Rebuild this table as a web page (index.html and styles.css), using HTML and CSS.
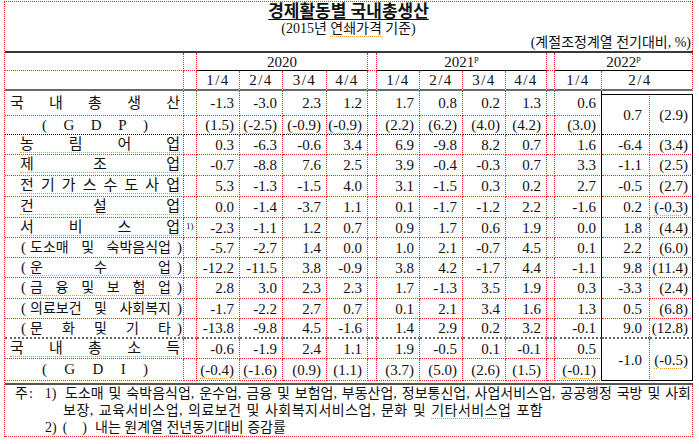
FILE: index.html
```html
<!DOCTYPE html>
<html lang="ko">
<head>
<meta charset="utf-8">
<title>경제활동별 국내총생산</title>
<link rel="stylesheet" href="styles.css">
</head>
<body>
<div class="page">
  <header class="head">
    <h1 class="title">경제활동별 국내총생산</h1>
    <p class="sub">(2015년 <span class="sq">연쇄가격</span> 기준)</p>
    <p class="unit">(계절조정계열 전기대비, %)</p>
  </header>

  <div class="grid">
    <!-- header row 1 -->
    <div class="c"></div>
    <div class="c"></div>
    <div class="c yr s4"><span>2020</span></div>
    <div class="c"></div>
    <div class="c yr s4"><span>2021<sup>p</sup></span></div>
    <div class="c"></div>
    <div class="c yr s3"><span>2022<sup>p</sup></span></div>

    <!-- header row 2 -->
    <div class="c h2"></div>
    <div class="c h2"></div>
    <div class="c h2 q">1/4</div>
    <div class="c h2 q">2/4</div>
    <div class="c h2 q">3/4</div>
    <div class="c h2 q">4/4</div>
    <div class="c h2"></div>
    <div class="c h2 q">1/4</div>
    <div class="c h2 q">2/4</div>
    <div class="c h2 q">3/4</div>
    <div class="c h2 q">4/4</div>
    <div class="c h2"></div>
    <div class="c h2 q">1/4</div>
    <div class="c h2 q s2 qw">2/4</div>

    <!-- 국내총생산 -->
    <div class="c lab w"><span class="t"><i>국</i><i>내</i><i>총</i><i>생</i><i>산</i></span></div>
    <div class="c"></div>
    <div class="c n">-1.3</div><div class="c n">-3.0</div><div class="c n">2.3</div><div class="c n">1.2</div>
    <div class="c"></div>
    <div class="c n">1.7</div><div class="c n">0.8</div><div class="c n">0.2</div><div class="c n">1.3</div>
    <div class="c"></div>
    <div class="c n bl">0.6</div>
    <div class="c n v r2 bt dk">0.7</div>
    <div class="c n br r2 bt dk">(2.9)</div>

    <!-- (GDP) -->
    <div class="c lab g dk"><span class="t"><i>(</i><i>G</i><i>D</i><i>P</i><i>)</i></span></div>
    <div class="c dk"></div>
    <div class="c n dk">(1.5)</div><div class="c n dk"><span class="sq">(-2.5)</span></div><div class="c n dk"><span class="sq">(-0.9)</span></div><div class="c n dk"><span class="sq">(-0.9)</span></div>
    <div class="c dk"></div>
    <div class="c n dk">(2.2)</div><div class="c n dk">(6.2)</div><div class="c n dk">(4.0)</div><div class="c n dk">(4.2)</div>
    <div class="c dk"></div>
    <div class="c n bl dk">(3.0)</div>

    <!-- 농림어업 -->
    <div class="c lab sq"><span class="t"><i>농</i><i>림</i><i>어</i><i>업</i></span></div>
    <div class="c"></div>
    <div class="c n">0.3</div><div class="c n">-6.3</div><div class="c n">-0.6</div><div class="c n">3.4</div>
    <div class="c"></div>
    <div class="c n">6.9</div><div class="c n">-9.8</div><div class="c n">8.2</div><div class="c n">0.7</div>
    <div class="c"></div>
    <div class="c n bl">1.6</div>
    <div class="c n v">-6.4</div>
    <div class="c n br">(3.4)</div>

    <!-- 제조업 -->
    <div class="c lab sq"><span class="t"><i>제</i><i>조</i><i>업</i></span></div>
    <div class="c"></div>
    <div class="c n">-0.7</div><div class="c n">-8.8</div><div class="c n">7.6</div><div class="c n">2.5</div>
    <div class="c"></div>
    <div class="c n">3.9</div><div class="c n">-0.4</div><div class="c n">-0.3</div><div class="c n">0.7</div>
    <div class="c"></div>
    <div class="c n bl">3.3</div>
    <div class="c n v">-1.1</div>
    <div class="c n br">(2.5)</div>

    <!-- 전기가스수도사업 -->
    <div class="c lab sq"><span class="t"><i>전</i><i>기</i><i>가</i><i>스</i><i>수</i><i>도</i><i>사</i><i>업</i></span></div>
    <div class="c"></div>
    <div class="c n">5.3</div><div class="c n">-1.3</div><div class="c n">-1.5</div><div class="c n">4.0</div>
    <div class="c"></div>
    <div class="c n">3.1</div><div class="c n">-1.5</div><div class="c n">0.3</div><div class="c n">0.2</div>
    <div class="c"></div>
    <div class="c n bl">2.7</div>
    <div class="c n v">-0.5</div>
    <div class="c n br">(2.7)</div>

    <!-- 건설업 -->
    <div class="c lab sq"><span class="t"><i>건</i><i>설</i><i>업</i></span></div>
    <div class="c"></div>
    <div class="c n">0.0</div><div class="c n">-1.4</div><div class="c n">-3.7</div><div class="c n">1.1</div>
    <div class="c"></div>
    <div class="c n">0.1</div><div class="c n">-1.7</div><div class="c n">-1.2</div><div class="c n">2.2</div>
    <div class="c"></div>
    <div class="c n bl">-1.6</div>
    <div class="c n v">0.2</div>
    <div class="c n br"><span class="sq">(-0.3)</span></div>

    <!-- 서비스업 -->
    <div class="c lab sq"><span class="t"><i>서</i><i>비</i><i>스</i><i>업</i></span></div>
    <div class="c ft"><span>1)</span></div>
    <div class="c n">-2.3</div><div class="c n">-1.1</div><div class="c n">1.2</div><div class="c n">0.7</div>
    <div class="c"></div>
    <div class="c n">0.9</div><div class="c n">1.7</div><div class="c n">0.6</div><div class="c n">1.9</div>
    <div class="c"></div>
    <div class="c n bl">0.0</div>
    <div class="c n v">1.8</div>
    <div class="c n br">(4.4)</div>

    <!-- 도소매 및 숙박음식업 -->
    <div class="c lab p"><span class="t"><i>(</i><span class="in"><i>도소매</i><i>및</i><i>숙박음식업</i></span><i>)</i></span></div>
    <div class="c"></div>
    <div class="c n">-5.7</div><div class="c n">-2.7</div><div class="c n">1.4</div><div class="c n">0.0</div>
    <div class="c"></div>
    <div class="c n">1.0</div><div class="c n">2.1</div><div class="c n">-0.7</div><div class="c n">4.5</div>
    <div class="c"></div>
    <div class="c n bl">0.1</div>
    <div class="c n v">2.2</div>
    <div class="c n br">(6.0)</div>

    <!-- 운수업 -->
    <div class="c lab p sqi"><span class="t"><i>(</i><span class="in"><i>운</i><i>수</i><i>업</i></span><i>)</i></span></div>
    <div class="c"></div>
    <div class="c n">-12.2</div><div class="c n">-11.5</div><div class="c n">3.8</div><div class="c n">-0.9</div>
    <div class="c"></div>
    <div class="c n">3.8</div><div class="c n">4.2</div><div class="c n">-1.7</div><div class="c n">4.4</div>
    <div class="c"></div>
    <div class="c n bl">-1.1</div>
    <div class="c n v">9.8</div>
    <div class="c n br">(11.4)</div>

    <!-- 금융 및 보험업 -->
    <div class="c lab p sqi"><span class="t"><i>(</i><span class="in"><i>금</i><i>융</i><i>및</i><i>보</i><i>험</i><i>업</i></span><i>)</i></span></div>
    <div class="c"></div>
    <div class="c n">2.8</div><div class="c n">3.0</div><div class="c n">2.3</div><div class="c n">2.3</div>
    <div class="c"></div>
    <div class="c n">1.7</div><div class="c n">-1.3</div><div class="c n">3.5</div><div class="c n">1.9</div>
    <div class="c"></div>
    <div class="c n bl">0.3</div>
    <div class="c n v">-3.3</div>
    <div class="c n br">(2.4)</div>

    <!-- 의료보건 및 사회복지 -->
    <div class="c lab p"><span class="t"><i>(</i><span class="in"><i>의료보건</i><i>및</i><i>사회복지</i></span><i>)</i></span></div>
    <div class="c"></div>
    <div class="c n">-1.7</div><div class="c n">-2.2</div><div class="c n">2.7</div><div class="c n">0.7</div>
    <div class="c"></div>
    <div class="c n">0.1</div><div class="c n">2.1</div><div class="c n">3.4</div><div class="c n">1.6</div>
    <div class="c"></div>
    <div class="c n bl">1.3</div>
    <div class="c n v">0.5</div>
    <div class="c n br">(6.8)</div>

    <!-- 문화 및 기타 -->
    <div class="c lab p db"><span class="t"><i>(</i><span class="in"><i>문</i><i>화</i><i>및</i><i>기</i><i>타</i></span><i>)</i></span></div>
    <div class="c db"></div>
    <div class="c n db">-13.8</div><div class="c n db">-9.8</div><div class="c n db">4.5</div><div class="c n db">-1.6</div>
    <div class="c db"></div>
    <div class="c n db">1.4</div><div class="c n db">2.9</div><div class="c n db">0.2</div><div class="c n db">3.2</div>
    <div class="c db"></div>
    <div class="c n bl db">-0.1</div>
    <div class="c n v db">9.0</div>
    <div class="c n br db">(12.8)</div>

    <!-- 국내총소득 -->
    <div class="c lab w sq"><span class="t"><i>국</i><i>내</i><i>총</i><i>소</i><i>득</i></span></div>
    <div class="c"></div>
    <div class="c n">-0.6</div><div class="c n">-1.9</div><div class="c n">2.4</div><div class="c n">1.1</div>
    <div class="c"></div>
    <div class="c n">1.9</div><div class="c n">-0.5</div><div class="c n">0.1</div><div class="c n">-0.1</div>
    <div class="c"></div>
    <div class="c n bl">0.5</div>
    <div class="c n v r2 bb">-1.0</div>
    <div class="c n br r2 bb"><span class="sq">(-0.5)</span></div>

    <!-- (GDI) -->
    <div class="c lab g"><span class="t"><i>(</i><i>G</i><i>D</i><i>I</i><i>)</i></span></div>
    <div class="c"></div>
    <div class="c n"><span class="sq">(-0.4)</span></div><div class="c n"><span class="sq">(-1.6)</span></div><div class="c n">(0.9)</div><div class="c n">(1.1)</div>
    <div class="c"></div>
    <div class="c n">(3.7)</div><div class="c n">(5.0)</div><div class="c n">(2.6)</div><div class="c n">(1.5)</div>
    <div class="c"></div>
    <div class="c n bl"><span class="sq">(-0.1)</span></div>
  </div>

  <div class="tail"></div>

  <div class="notes">
    <div class="nl first">
      <span class="lead"><i class="ju">주</i><i class="co">:</i><i class="no">1)</i></span>
      <span class="jt">도소매 및 숙박음식업, 운수업, 금융 및 보험업, 부동산업, 정보통신업, 사업서비스업, 공공행정 국방 및 사회</span>
    </div>
    <div class="nl ind">보장, 교육서비스업, 의료보건 및 사회복지서비스업, 문화 및 <span class="sq">기타서비스업</span> 포함</div>
    <div class="nl third"><span class="no2">2)</span><span class="pa">(</span><span class="pa2">)</span><span class="rest">내는 원계열 <span class="sq">전년동기대비</span> 증감률</span></div>
  </div>
</div>
</body>
</html>
```

FILE: styles.css
```css
html, body {
  margin: 0;
  padding: 0;
  background: #fff;
}

body {
  font-family: "Liberation Serif", "Noto Sans CJK KR", serif;
  color: #111;
}

i {
  font-style: normal;
}

.page {
  margin: 1px 0 0 4px;
  width: 689px;
  box-sizing: border-box;
  border-left: 1px dotted #f22;
  border-top: 1px dotted #f22;
}

/* ---------- heading ---------- */
.head {
  height: 49px;
  box-sizing: border-box;
  border-right: 1px dotted #f22;
}

.title {
  margin: 0;
  font-size: 17px;
  font-weight: 700;
  line-height: 20px;
  text-align: center;
  text-decoration: underline;
  text-decoration-thickness: 1px;
  text-underline-offset: 2px;
}

.sub {
  margin: 0;
  font-size: 14px;
  line-height: 14px;
  text-align: center;
}

.unit {
  margin: 0;
  font-size: 14px;
  line-height: 14px;
  text-align: right;
  padding-right: 1px;
}

.sq {
  text-decoration: underline dotted #f39a1e;
  text-decoration-thickness: 1px;
  text-underline-offset: 3px;
}

/* ---------- table grid ---------- */
.grid {
  display: grid;
  grid-template-columns: 179px 13px 43px 43px 44px 41px 9px 43px 43px 43px 41px 8px 47px 48px 43px;
  grid-template-rows: 18px 20px 25px 19px 20px 21px 21px 21px 20px 20px 20px 21px 20px 20px 20px 22px;
  border-top: 2px solid #3a3a3a;
  font-size: 15px;
}

.c {
  box-sizing: border-box;
  min-width: 0;
  display: flex;
  align-items: center;
  border-right: 1px dotted #f22;
  border-bottom: 1px dotted #f22;
  line-height: 16px;
  white-space: nowrap;
}

.s4 { grid-column: span 4; }
.s3 { grid-column: span 3; }
.s2 { grid-column: span 2; }
.r2 { grid-row: span 2; }

.yr {
  justify-content: center;
  border-bottom: 1px solid #000;
}

.yr sup {
  font-size: 9px;
  line-height: 0;
  vertical-align: 6px;
}

.h2 {
  border-bottom: 2px solid #6a6a6a;
}

.q {
  justify-content: center;
  letter-spacing: 1.5px;
}

.qw {
  padding-right: 14px;
}

/* numbers */
.n {
  justify-content: flex-end;
  padding-right: 5px;
}

.v {
  padding-right: 7px;
}

.bl {
  border-right: 1px solid #000;
}

.br {
  border-right: 1px solid #000;
  padding-right: 4px;
}

.bt {
  border-top: 1px solid #000;
  margin-top: 3px;
}

.bb {
  border-bottom: 1px solid #000;
}

.dk {
  border-bottom: 1px dotted #000;
}

.db {
  border-bottom: 2px dotted #666;
}

/* labels */
.lab {
  padding: 0 3px 0 15px;
}

.lab.w {
  padding-left: 5px;
}

.lab.g {
  padding: 0 35px 0 37px;
}

.lab.p {
  padding: 0 1px 0 16px;
}

.t {
  flex: 1;
  display: flex;
  justify-content: space-between;
  align-items: baseline;
  line-height: 15px;
}

.lab.p .t {
  font-size: 14px;
}

.lab.p .t > i {
  font-size: 15px;
}

.in {
  flex: 1;
  display: flex;
  justify-content: space-between;
  margin: 0 6px 0 4px;
}

.lab.sq {
  text-decoration: none;
}

.lab.sq .t,
.lab.sqi .in {
  border-bottom: 1px dotted #f39a1e;
}

.ft {
  align-items: flex-start;
  font-size: 9px;
  line-height: 10px;
  padding: 3px 0 0 2px;
}

/* ---------- bottom rule + notes ---------- */
.tail {
  height: 4px;
  box-sizing: border-box;
  border-bottom: 2px solid #555;
}

.notes {
  height: 52px;
  box-sizing: border-box;
  border-right: 1px dotted #f22;
  border-bottom: 1px dotted #f22;
  font-size: 14px;
  line-height: 17px;
}

.nl {
  white-space: nowrap;
}

.first {
  display: flex;
}

.lead {
  flex: none;
  width: 60px;
  display: flex;
}

.ju {
  margin-left: 10px;
}

.co {
  margin-left: 1px;
}

.no {
  margin-left: 12px;
}

.jt {
  flex: 1;
  min-width: 0;
  text-align: justify;
  text-align-last: justify;
  word-spacing: -2.5px;
  padding-right: 1px;
}

.ind {
  padding-left: 58px;
  word-spacing: 1px;
  letter-spacing: 0.5px;
}

.third {
  padding-left: 40px;
}

.pa {
  margin-left: 6px;
}

.pa2 {
  margin-left: 15px;
}

.rest {
  margin-left: 8px;
}
```
